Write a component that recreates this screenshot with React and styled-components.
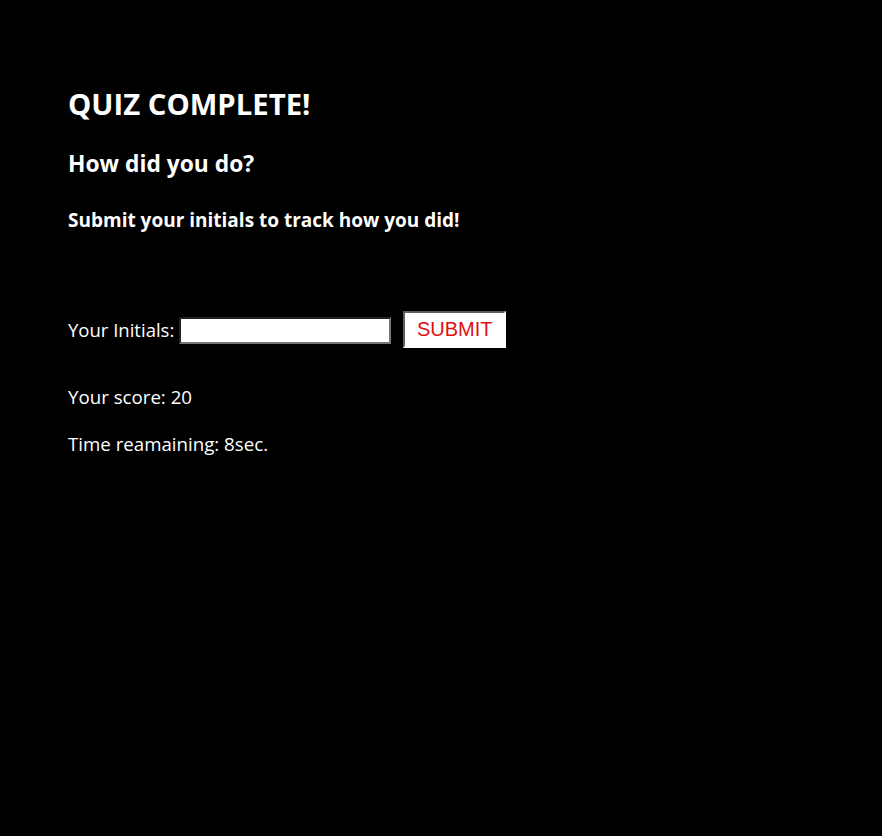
import React from "react";
import styled, { createGlobalStyle } from "styled-components";

const GlobalStyle = createGlobalStyle`
  html, body {
    margin: 0;
    background: #000;
    min-height: 100%;
  }
  body {
    font-family: "Open Sans", "Noto Sans", sans-serif;
    color: #fff;
  }
`;

function App() {
  return (
    <>
      <GlobalStyle />
      <Page>
        <Title>QUIZ COMPLETE!</Title>
        <SubTitle>How did you do?</SubTitle>
        <Prompt>Submit your initials to track how you did!</Prompt>
        <Form onSubmit={(e) => e.preventDefault()}>
          <Label htmlFor="initials">Your Initials:</Label>
          <Input id="initials" type="text" />
          <SubmitButton type="submit">SUBMIT</SubmitButton>
        </Form>
        <Stat>Your score: 20</Stat>
        <Stat>Time reamaining: 8sec.</Stat>
      </Page>
    </>
  );
}

export default App;

const Page = styled.div`
  min-height: 836px;
  box-sizing: border-box;
  padding: 86px 68px;
  background: #000;
`;
const Title = styled.h1`
  margin: 0 0 27px;
  font-size: 29.3px;
  font-weight: 700;
  line-height: 36px;
`;
const SubTitle = styled.h2`
  margin: 0 0 28px;
  font-size: 22.8px;
  font-weight: 700;
  line-height: 30px;
`;
const Prompt = styled.h3`
  margin: 0 0 77px;
  font-size: 19px;
  font-weight: 700;
  line-height: 26px;
`;
const Form = styled.form`
  display: flex;
  align-items: center;
  height: 38px;
  margin-bottom: 36px;
`;
const Label = styled.label`
  font-size: 18.5px;
  margin-right: 5px;
`;
const Input = styled.input`
  width: 212px;
  height: 27px;
  box-sizing: border-box;
  border: 2px inset #767676;
  background: #fff;
  padding: 0 4px;
  margin: 3px 12px 0 0;
`;
const SubmitButton = styled.button`
  width: 103px;
  height: 37px;
  box-sizing: border-box;
  background: #fff;
  color: #e01010;
  border: 2px solid #fff;
  border-top-color: #5f5f5f;
  border-left-color: #5f5f5f;
  font-family: "Liberation Sans", Arial, sans-serif;
  font-size: 20px;
  cursor: pointer;
`;
const Stat = styled.p`
  margin: 0 0 21px;
  font-size: 18.7px;
  line-height: 26px;
`;
